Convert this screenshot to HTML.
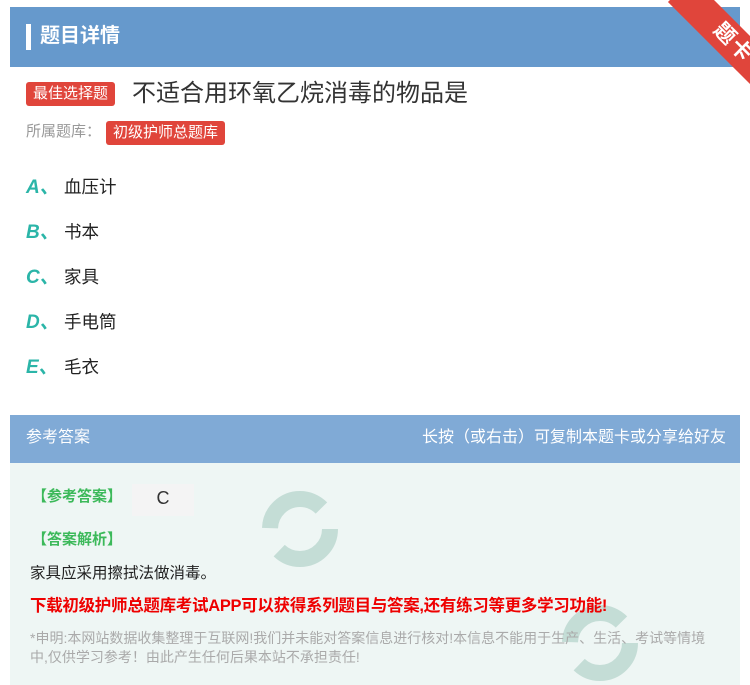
<!DOCTYPE html>
<html><head><meta charset="utf-8"><style>
body{margin:0;width:750px;height:685px;background:#fff;position:relative;overflow:hidden;font-family:"Liberation Sans","Noto Sans CJK SC",sans-serif;}
.hd{position:absolute;left:10px;top:7px;width:730px;height:60px;background:#6699cc;}
.hd .bar{position:absolute;left:16px;top:17px;width:5px;height:26px;background:#fff;}
.hd .t{position:absolute;left:30px;top:14px;color:#fff;font-size:20px;font-weight:bold;line-height:30px;}
.rib{position:absolute;left:658px;top:26px;width:150px;height:34px;background:#e0453b;transform:rotate(45deg);transform-origin:center;color:#fff;font-size:21px;font-weight:bold;text-align:center;line-height:34px;letter-spacing:2px;}
.tag{position:absolute;background:#e0453b;color:#fff;border-radius:3px;font-size:15px;line-height:24px;padding:0 7px;}
.q{position:absolute;left:132px;top:79px;font-size:24px;color:#333;line-height:30px;}
.lib{position:absolute;left:26px;top:121px;font-size:15px;color:#999;line-height:22px;}
.opt{position:absolute;left:26px;font-size:17.5px;color:#222;line-height:24px;}
.opt b{color:#2bb5a8;font-style:italic;font-size:19px;display:inline-block;width:38px;font-family:"Liberation Sans",sans-serif;}
.ah{position:absolute;left:10px;top:415px;width:730px;height:48px;background:#80aad6;color:#fff;font-size:16px;line-height:46px;}
.ab{position:absolute;left:10px;top:463px;width:730px;height:222px;background:#eef6f4;}
.g{color:#3cb95a;font-weight:bold;font-size:15px;position:absolute;}
</style></head><body>
<div class="hd"><div class="bar"></div><div class="t">题目详情</div></div>
<div class="rib">题卡</div>
<div class="tag" style="left:26px;top:82px;">最佳选择题</div>
<div class="q">不适合用环氧乙烷消毒的物品是</div>
<div class="lib">所属题库：</div>
<div class="tag" style="left:106px;top:121px;">初级护师总题库</div>
<div class="opt" style="top:175px"><b>A、</b>血压计</div>
<div class="opt" style="top:220px"><b>B、</b>书本</div>
<div class="opt" style="top:265px"><b>C、</b>家具</div>
<div class="opt" style="top:310px"><b>D、</b>手电筒</div>
<div class="opt" style="top:355px"><b>E、</b>毛衣</div>
<div class="ah"><span style="position:absolute;left:16px">参考答案</span><span style="position:absolute;right:14px">长按（或右击）可复制本题卡或分享给好友</span></div>
<div class="ab">
<svg width="730" height="222" style="position:absolute;left:0;top:0">
<circle cx="290" cy="66" r="30" fill="none" stroke="#c4ddd6" stroke-width="16" stroke-dasharray="70 25"/>
<circle cx="590" cy="180" r="30" fill="none" stroke="#c4ddd6" stroke-width="16" stroke-dasharray="70 25"/>
</svg>
<div class="g" style="left:22px;top:22px;">【参考答案】</div>
<div style="position:absolute;left:122px;top:21px;width:62px;height:32px;background:#f4f4f4;font-size:18px;color:#333;text-align:center;line-height:28px;">C</div>
<div class="g" style="left:22px;top:65px;">【答案解析】</div>
<div style="position:absolute;left:20px;top:98px;font-size:15.5px;color:#222;">家具应采用擦拭法做消毒。</div>
<div style="position:absolute;left:20px;top:129px;font-size:16.5px;color:#e00;font-weight:bold;letter-spacing:-0.3px;">下载初级护师总题库考试APP可以获得系列题目与答案,还有练习等更多学习功能!</div>
<div style="position:absolute;left:20px;top:166px;width:688px;font-size:14px;color:#aaa;line-height:19px;">*申明:本网站数据收集整理于互联网!我们并未能对答案信息进行核对!本信息不能用于生产、生活、考试等情境中,仅供学习参考！由此产生任何后果本站不承担责任!</div>
</div>
</body></html>
